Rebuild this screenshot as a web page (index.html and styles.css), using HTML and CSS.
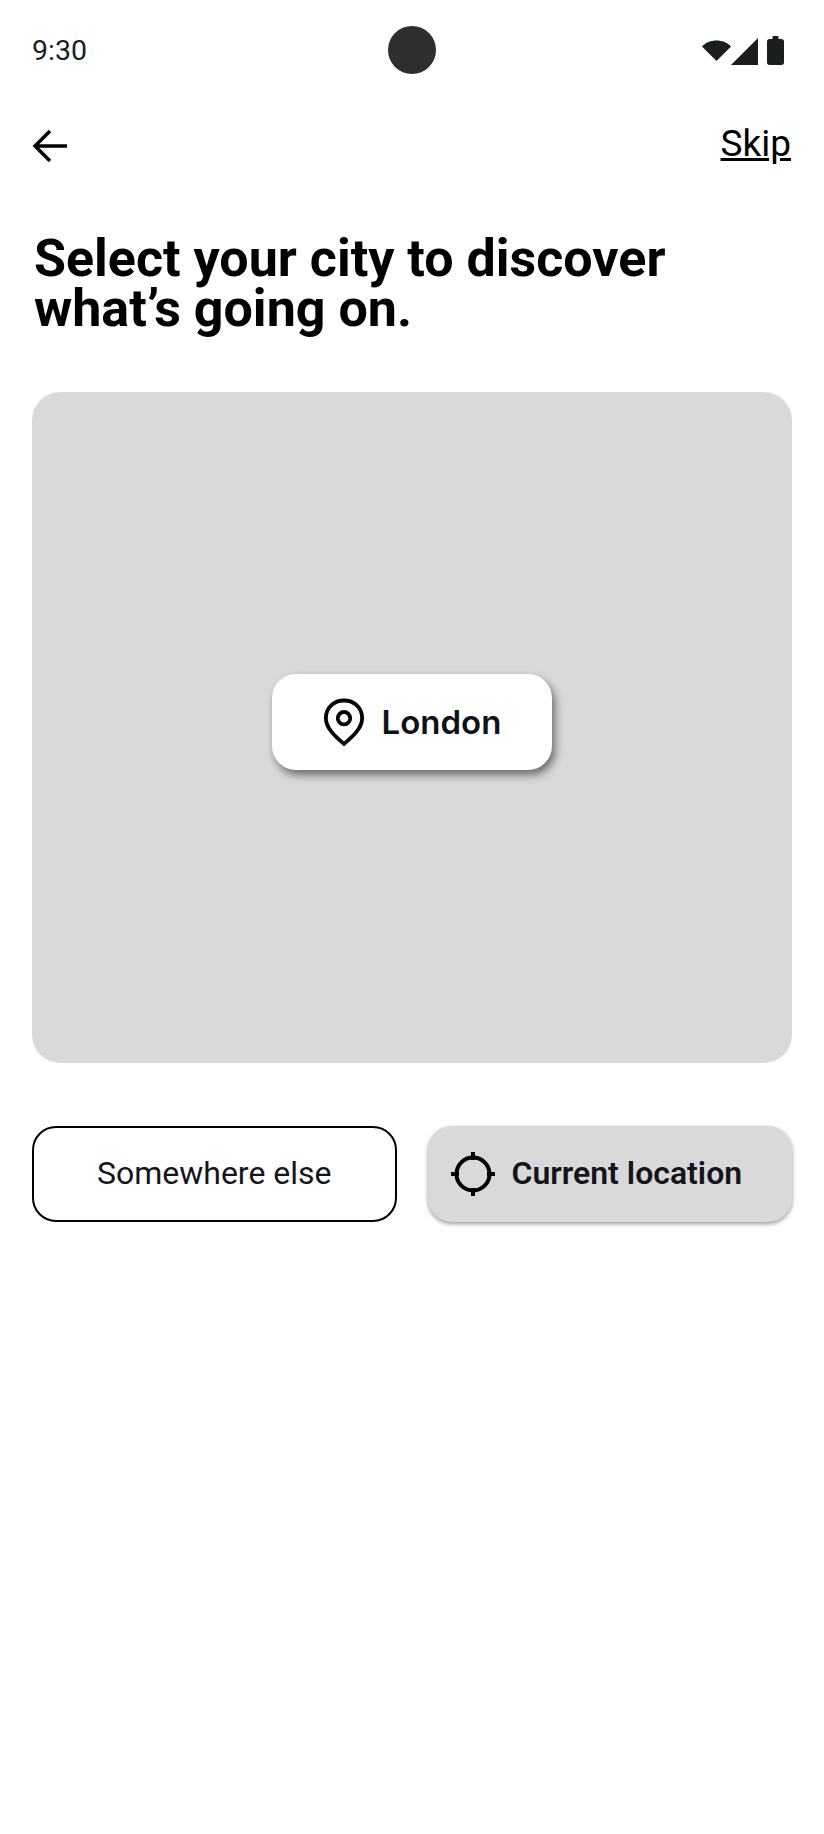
FILE: index.html
```html
<!DOCTYPE html>
<html>
    <head>
        <title>Select city</title>
        <link rel="stylesheet" href="styles.css">
    </head>
    <body>
        <div class="screen">
            <div class="status-bar">
                <span class="time">9:30</span>
                <span class="camera"></span>
                <div class="status-icons">
                    <svg class="wifi" width="29" height="21" viewBox="0 0 29 21"><path d="M0 6.500C7-1.500 22-1.500 29 6.500L14.500 21Z" fill="#1a1f1c"/></svg>
                    <svg width="27" height="27" viewBox="0 0 27 27"><path d="M0 27L27 0V27Z" fill="#1a1f1c"/></svg>
                    <svg class="battery" width="17" height="29" viewBox="0 0 17 29"><path d="M5.500 3V1C5.500 .4 5.900 0 6.500 0H10.500C11.100 0 11.500 .4 11.500 1V3H14.500C15.900 3 17 4 17 5.500V26.500C17 28 15.900 29 14.500 29H2.500C1.100 29 0 28 0 26.500V5.500C0 4 1.100 3 2.500 3Z" fill="#1a1f1c"/></svg>
                </div>
            </div>

            <div class="top-nav">
                <svg class="back" width="36" height="36" viewBox="0 0 36 36"><path d="M35 18H4M18 3L3 18L18 33" fill="none" stroke="#000" stroke-width="3.500"/></svg>
                <a class="skip" href="#">Skip</a>
            </div>

            <h1 class="title">Select your city to discover<br>what’s going on.</h1>

            <div class="map">
                <div class="city-chip">
                    <svg width="42" height="48" viewBox="0 0 44 50"><path d="M22 48C14 41 3 32 3 21C3 10 11.500 2.500 22 2.500C32.500 2.500 41 10 41 21C41 32 30 41 22 48Z" fill="none" stroke="#000" stroke-width="4" stroke-linejoin="round"/><circle cx="22" cy="21" r="6.500" fill="none" stroke="#000" stroke-width="4"/></svg>
                    <span>London</span>
                </div>
            </div>

            <div class="actions">
                <button class="btn btn-outline">Somewhere else</button>
                <button class="btn btn-grey">
                    <svg width="44" height="44" viewBox="0 0 44 44"><circle cx="22" cy="22" r="16.500" fill="none" stroke="#000" stroke-width="4"/><path d="M22 0V8M22 36V44M0 22H8M36 22H44" stroke="#000" stroke-width="4"/></svg>
                    <span class="btn-label">Current location</span>
                </button>
            </div>
        </div>
    </body>
</html>
```

FILE: styles.css
```css
body {
    margin: 0;
    background: #fff;
    font-family: Roboto, sans-serif;
    color: #000;
}
.screen {
    width: 824px;
    height: 1834px;
    padding: 0 32px;
    box-sizing: border-box;
    overflow: hidden;
}
.status-bar {
    height: 100px;
    display: flex;
    align-items: center;
    justify-content: space-between;
    position: relative;
}
.time {
    font-size: 28.500px;
    color: #1a1f1c;
}
.camera {
    position: absolute;
    left: 356px;
    top: 26px;
    width: 48px;
    height: 48px;
    border-radius: 50%;
    background: #2e2e2e;
}
.status-icons {
    display: flex;
    align-items: flex-end;
    margin-right: 8px;
}
.wifi {
    margin-bottom: 4px;
}
.battery {
    margin-left: 9px;
}
.top-nav {
    display: flex;
    align-items: center;
    justify-content: space-between;
    height: 60px;
    margin-top: 14px;
}
.back {
    margin-top: 4px;
}
.skip {
    font-size: 37px;
    color: #000;
    margin: 0 1px 2px 0;
}
.title {
    margin: 60px 0 0;
    padding-left: 2px;
    font-size: 52px;
    line-height: 50px;
    font-weight: 700;
}
.map {
    height: 671px;
    margin-top: 58px;
    background: #d9d9d9;
    border-radius: 28px;
    display: flex;
    align-items: center;
    justify-content: center;
}
.city-chip {
    width: 280px;
    height: 96px;
    margin-bottom: 11px;
    background: #fff;
    border-radius: 24px;
    box-shadow: 3px 5px 8px rgba(0, 0, 0, 0.5);
    display: flex;
    align-items: center;
    justify-content: center;
    gap: 17px;
    font-family: Inter, sans-serif;
    font-size: 33px;
    font-weight: 600;
    color: #101018;
}
.actions {
    display: grid;
    grid-template-columns: 1fr 1fr;
    gap: 31px;
    margin-top: 63px;
}
.btn {
    height: 96px;
    padding: 0;
    border-radius: 24px;
    font-family: Roboto, sans-serif;
    font-size: 32px;
    color: #14141c;
    display: flex;
    align-items: center;
    justify-content: center;
}
.btn-outline {
    background: #fff;
    border: 2px solid #000;
    padding-bottom: 3px;
}
.btn-grey {
    background: #d9d9d9;
    border: none;
    font-weight: 600;
    justify-content: flex-start;
    padding-left: 23px;
    gap: 17px;
    box-shadow: 0 2px 4px rgba(0, 0, 0, 0.4);
}
.btn-label {
    margin-bottom: 2px;
}
```
